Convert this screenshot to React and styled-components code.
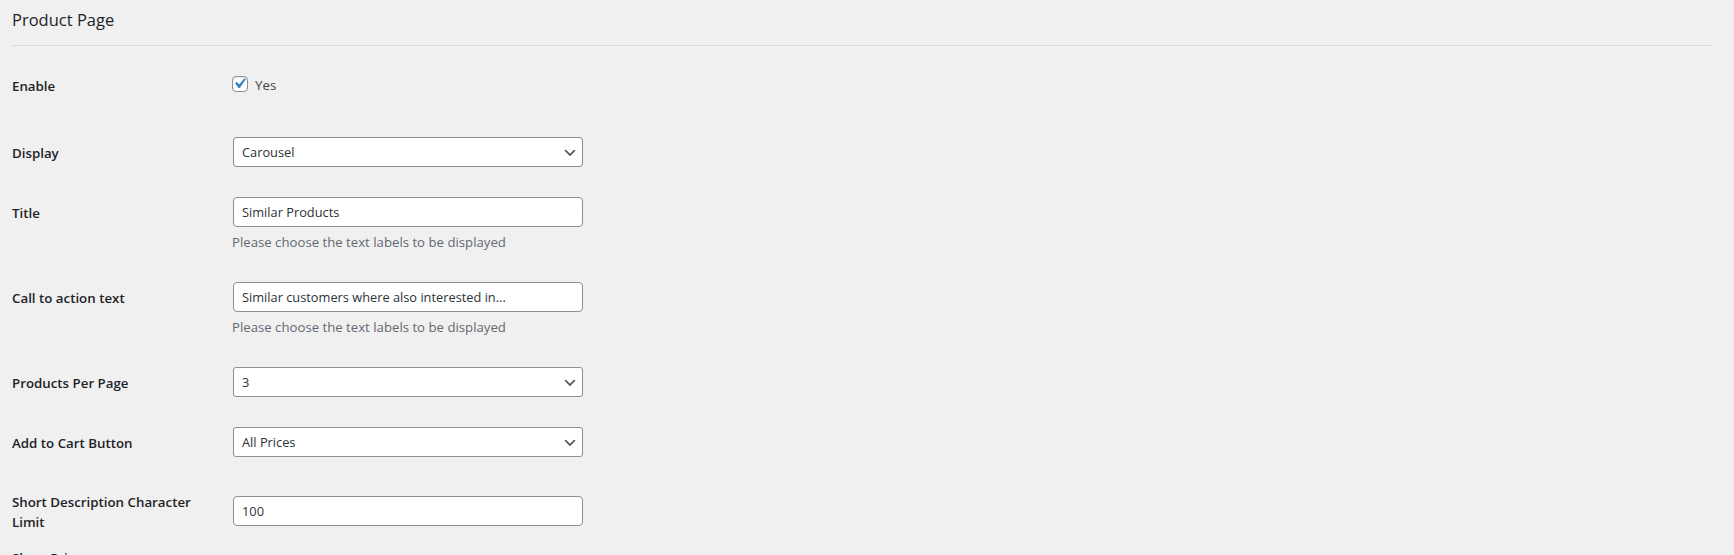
import React from "react";
import styled, { createGlobalStyle } from "styled-components";

const Global = createGlobalStyle`
  html, body { margin: 0; padding: 0; background: #f0f0f1; }
  body {
    font-family: "Open Sans", "Noto Sans", sans-serif;
    color: #3c434a;
    font-size: 14px;
  }
  * { box-sizing: border-box; }
`;

const Page = styled.div`
  padding: 0 22px 0 12px;
  height: 555px;
  overflow: hidden;
`;

const Heading = styled.h2`
  margin: 9px 0 0;
  font-size: 16.5px;
  line-height: 22px;
  font-weight: 400;
  color: #1d2327;
`;

const Divider = styled.hr`
  margin: 14px 0 0;
  border: 0;
  border-top: 1px solid #dcdcde;
  height: 0;
`;

const Form = styled.div`
  display: flex;
  flex-direction: column;
`;

const Row = styled.div`
  display: grid;
  grid-template-columns: 220px 351px;
  align-items: ${(p) => (p.$center ? "center" : "start")};
  padding: ${(p) => (p.$pt ?? 15)}px 0 ${(p) => (p.$pb ?? 15)}px;
`;

const Label = styled.label`
  min-height: 30px;
  display: flex;
  align-items: center;
  padding: 2px 10px 0 0;
  font-size: 13.3px;
  line-height: 20px;
  font-weight: 600;
  color: #1d2327;
`;

const Field = styled.div`
  display: flex;
  flex-direction: column;
`;

const CheckLine = styled.label`
  display: flex;
  align-items: center;
  gap: 7px;
  height: 20px;
  font-size: 13.3px;
  color: #3c434a;
`;

const Box = styled.span`
  position: relative;
  width: 16px;
  height: 16px;
  border: 1px solid #8c8f94;
  border-radius: 4px;
  background: #fff;
  box-shadow: inset 0 1px 2px rgba(0, 0, 0, 0.1);
  margin-top: -2px;
  svg {
    position: absolute;
    left: -4px;
    top: -4px;
    width: 21px;
    height: 21px;
  }
`;

const TextInput = styled.input`
  width: 350px;
  height: 30px;
  margin: 0 0 0 1px;
  padding: 0 8px;
  border: 1px solid #8c8f94;
  border-radius: 4px;
  background: #fff;
  font-family: inherit;
  font-size: 12.8px;
  color: #2c3338;
  outline: none;
`;

const SelectWrap = styled.div`
  position: relative;
  width: 350px;
  margin-left: 1px;
  svg {
    position: absolute;
    right: 5px;
    top: 8px;
    width: 16px;
    height: 16px;
    pointer-events: none;
  }
`;

const Select = styled.select`
  appearance: none;
  -webkit-appearance: none;
  width: 350px;
  height: 30px;
  padding: 0 24px 0 8px;
  border: 1px solid #8c8f94;
  border-radius: 3px;
  background: #fff;
  font-family: inherit;
  font-size: 12.8px;
  color: #2c3338;
  outline: none;
`;

const Description = styled.p`
  margin: 5px 0 0 0;
  font-size: 13.2px;
  line-height: 20px;
  color: #646970;
`;

const Chevron = () => (
  <svg viewBox="0 0 20 20">
    <path d="M5 6l5 5 5-5 2 1-7 7-7-7 2-1z" fill="#50575e" />
  </svg>
);

const Dropdown = ({ value, options }) => (
  <SelectWrap>
    <Select defaultValue={value}>
      {options.map((o) => (
        <option key={o}>{o}</option>
      ))}
    </Select>
    <Chevron />
  </SelectWrap>
);

export default function App() {
  return (
    <>
      <Global />
      <Page>
        <Heading>Product Page</Heading>
        <Divider />
        <Form>
          <Row $center $pt={24} $pb={22}>
            <Label>Enable</Label>
            <Field>
              <CheckLine>
                <Box>
                  <svg viewBox="0 0 20 20">
                    <path
                      d="M14.83 4.89l1.34.94-5.81 8.38H9.02L5.78 9.67l1.34-1.25 2.57 2.4z"
                      fill="#3582c4"
                    />
                  </svg>
                </Box>
                Yes
              </CheckLine>
            </Field>
          </Row>
          <Row>
            <Label>Display</Label>
            <Field>
              <Dropdown value="Carousel" options={["Carousel", "Grid", "List"]} />
            </Field>
          </Row>
          <Row>
            <Label>Title</Label>
            <Field>
              <TextInput defaultValue="Similar Products" />
              <Description>Please choose the text labels to be displayed</Description>
            </Field>
          </Row>
          <Row>
            <Label>Call to action text</Label>
            <Field>
              <TextInput defaultValue="Similar customers where also interested in..." />
              <Description>Please choose the text labels to be displayed</Description>
            </Field>
          </Row>
          <Row>
            <Label>Products Per Page</Label>
            <Field>
              <Dropdown value="3" options={["1", "2", "3", "4", "5", "6"]} />
            </Field>
          </Row>
          <Row>
            <Label>Add to Cart Button</Label>
            <Field>
              <Dropdown value="All Prices" options={["All Prices", "Hide", "Show"]} />
            </Field>
          </Row>
          <Row $center $pt={18} $pb={10}>
            <Label>Short Description Character Limit</Label>
            <Field>
              <TextInput defaultValue="100" />
            </Field>
          </Row>
          <Row $pt={0}>
            <Label>Show Price</Label>
            <Field />
          </Row>
        </Form>
      </Page>
    </>
  );
}
